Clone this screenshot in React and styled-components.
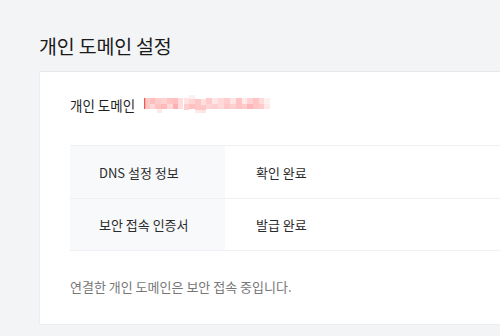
import React from 'react';
import styled, {createGlobalStyle} from 'styled-components';

const GlobalStyle = createGlobalStyle`
  html, body {
    margin: 0;
    padding: 0;
    background: #f3f4f6;
    font-family: "Noto Sans CJK KR", "Noto Sans", sans-serif;
    overflow: hidden;
  }
`;

const Page = styled.div`
  width: 500px;
  height: 336px;
  padding: 32px 0 0 39px;
  box-sizing: border-box;
  overflow: hidden;
`;

const Title = styled.h1`
  margin: 0 0 12px;
  height: 27px;
  font-size: 19.5px;
  line-height: 27px;
  font-weight: 400;
  color: #1a1a1a;
  letter-spacing: -0.2px;
`;

const Card = styled.section`
  width: 520px;
  height: 254px;
  background: #fff;
  border-top: 1px solid #e6e8ec;
  border-left: 1px solid #eceef1;
  border-bottom: 1px solid #eceef1;
  box-sizing: border-box;
  padding: 20px 0 0 30px;
`;

const DomainRow = styled.div`
  display: flex;
  align-items: center;
  gap: 9px;
  height: 26px;
  font-size: 13.5px;
  color: #1f1f1f;
`;

const Table = styled.div`
  margin-top: 27px;
  border-top: 1px solid #eef0f3;
`;

const Row = styled.div`
  display: grid;
  grid-template-columns: 155px 1fr;
  box-sizing: border-box;
  height: ${p => p.h}px;
  border-bottom: 1px solid #eef0f3;
`;

const HeadCell = styled.div`
  background: #f8f9fb;
  display: flex;
  align-items: center;
  padding-left: 29px;
  font-size: 13px;
  color: #2b2b2b;
`;

const ValueCell = styled.div`
  display: flex;
  align-items: center;
  padding-left: 31px;
  font-size: 13px;
  color: #2b2b2b;
`;

const Note = styled.p`
  margin: 26px 0 0;
  font-size: 13px;
  color: #777;
  line-height: 20px;
`;

const blocks = [
  [0, 3, 4, 11, '#ffc9c9'], [4, 3, 5, 6, '#ffbdbd'], [4, 9, 5, 5, '#ffd7d7'],
  [9, 3, 6, 6, '#ffcccc'], [9, 9, 6, 5, '#ffc2c2'], [15, 3, 6, 6, '#ffd2d2'],
  [15, 9, 6, 5, '#ffbaba'], [21, 3, 6, 6, '#ffc4c4'], [21, 9, 6, 5, '#ffd9d9'],
  [27, 3, 5, 6, '#ffc0c0'], [27, 9, 5, 5, '#ffb0b0'], [32, 3, 5, 11, '#ffdede'],
  [38, 3, 5, 6, '#ffe2e2'], [38, 9, 5, 6, '#ffcfcf'], [43, 0, 6, 4, '#fff0f0'],
  [43, 4, 6, 5, '#ffd6d6'], [43, 9, 6, 5, '#ffc0c0'], [49, 4, 6, 11, '#ffc8c8'],
  [55, 4, 5, 6, '#ffe0e0'], [55, 10, 5, 5, '#ffc6c6'], [60, 3, 6, 6, '#ffcaca'],
  [60, 9, 6, 5, '#ffd4d4'], [66, 3, 6, 6, '#ffe6e6'], [66, 9, 6, 5, '#ffcece'],
  [72, 3, 6, 11, '#ffd8d8'], [78, 3, 6, 6, '#ffcdcd'], [78, 9, 6, 5, '#ffc7c7'],
  [84, 3, 6, 6, '#ffe4e4'], [84, 9, 6, 5, '#ffd0d0'], [90, 3, 6, 11, '#ffc3c3'],
  [96, 3, 5, 6, '#ffeaea'], [96, 9, 5, 5, '#ffcbcb'], [101, 3, 6, 6, '#ffd3d3'],
  [101, 9, 6, 5, '#ffb8b8'], [107, 3, 6, 11, '#ffc5c5'], [113, 3, 5, 6, '#ffdcdc'],
  [113, 9, 5, 5, '#ffcaca'], [118, 3, 6, 6, '#fff0f0'], [118, 9, 6, 5, '#ffe8e8'],
  [11, 14, 5, 4, '#ffe8e8'], [49, 15, 6, 3, '#ffeaea'], [55, 15, 5, 3, '#ffe2e2'],
];

const Masked = () => (
  <svg width="126" height="20" viewBox="0 0 126 20" style={{display: 'block'}}>
    {blocks.map(([x, y, w, h, c], i) => (
      <rect key={i} x={x + 2} y={y} width={w} height={h} fill={c} />
    ))}
    <rect x="0" y="3" width="1.5" height="11" fill="#f25a4a" />
  </svg>
);

const App = () => (
  <>
    <GlobalStyle />
    <Page>
      <Title>개인 도메인 설정</Title>
      <Card>
        <DomainRow>
          <span>개인 도메인</span>
          <Masked />
        </DomainRow>
        <Table>
          <Row h={53}>
            <HeadCell>DNS 설정 정보</HeadCell>
            <ValueCell>확인 완료</ValueCell>
          </Row>
          <Row h={52}>
            <HeadCell>보안 접속 인증서</HeadCell>
            <ValueCell>발급 완료</ValueCell>
          </Row>
        </Table>
        <Note>연결한 개인 도메인은 보안 접속 중입니다.</Note>
      </Card>
    </Page>
  </>
);

export default App;
